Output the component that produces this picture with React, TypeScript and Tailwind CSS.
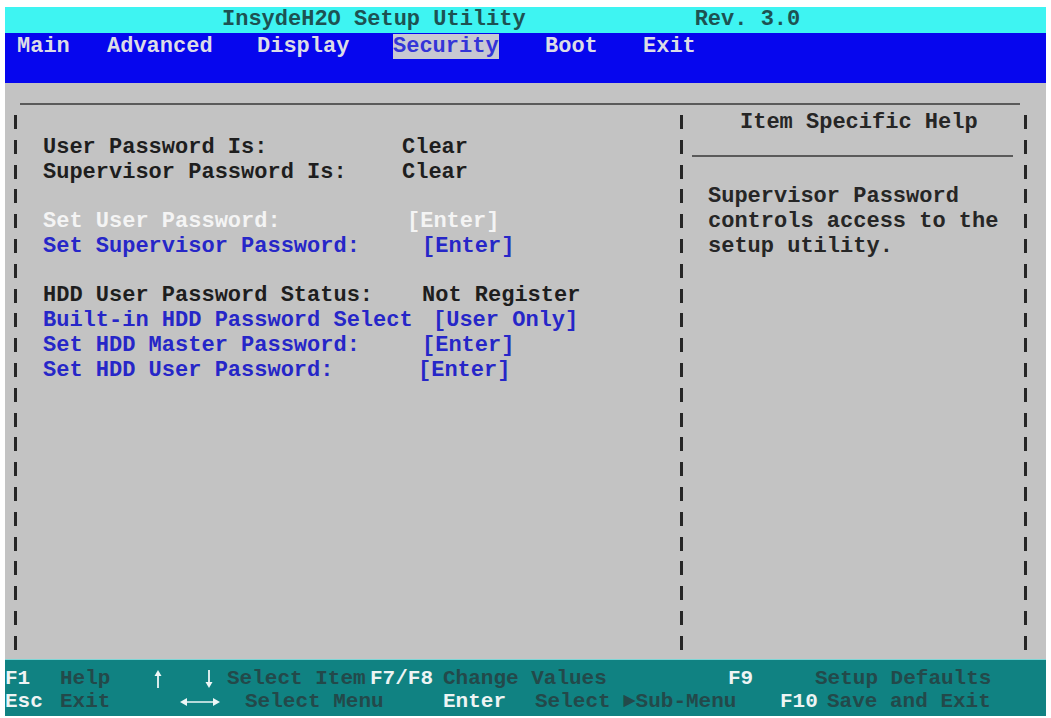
import React from "react"

type Row = { label?: string; value?: string; w?: string; tone?: "dark" | "blue" | "white" }

const tones = {
  dark: "text-[#1e1e1e]",
  blue: "text-[#2626c8]",
  white: "text-[#f4f4f4]",
}

const leftRows: Row[] = [
  {},
  { label: "User Password Is:", value: "Clear", w: "w-[359px]", tone: "dark" },
  { label: "Supervisor Password Is:", value: "Clear", w: "w-[359px]", tone: "dark" },
  {},
  { label: "Set User Password:", value: "[Enter]", w: "w-[364px]", tone: "white" },
  { label: "Set Supervisor Password:", value: "[Enter]", w: "w-[379px]", tone: "blue" },
  {},
  { label: "HDD User Password Status:", value: "Not Register", w: "w-[379px]", tone: "dark" },
  { label: "Built-in HDD Password Select", value: "[User Only]", w: "w-[390px]", tone: "blue" },
  { label: "Set HDD Master Password:", value: "[Enter]", w: "w-[379px]", tone: "blue" },
  { label: "Set HDD User Password:", value: "[Enter]", w: "w-[375px]", tone: "blue" },
]

const ROWS = 22

/** dashed "|" column, one dash per text row */
function Bar() {
  return (
    <div className="h-[545.6px] w-[3px] shrink-0 bg-[repeating-linear-gradient(to_bottom,transparent_0px,transparent_5px,#262626_5px,#262626_19px,transparent_19px,transparent_24.8px)]" />
  )
}

const ink = "#eef6f6"

function LongArrow() {
  return (
    <svg width="40" height="12" viewBox="0 0 40 12" className="inline-block">
      <line x1="3" y1="6" x2="37" y2="6" stroke={ink} strokeWidth="1.6" />
      <path d="M0 6 L7 2 L7 10 Z" fill={ink} />
      <path d="M40 6 L33 2 L33 10 Z" fill={ink} />
    </svg>
  )
}

function VArrow({ down }: { down?: boolean }) {
  return (
    <svg width="10" height="18" viewBox="0 0 10 18" className={down ? "rotate-180" : ""}>
      <line x1="5" y1="4" x2="5" y2="18" stroke={ink} strokeWidth="1.8" />
      <path d="M5 0 L1.5 6 L8.5 6 Z" fill={ink} />
    </svg>
  )
}

export default function App() {
  const key = "text-[#eef4f4]"
  const desc = "text-[#23494a]"

  return (
    <div className="h-[718px] w-[1051px] overflow-hidden bg-white px-[5px] pt-[7px] font-['Liberation_Mono','Courier_New',monospace] text-[22px] font-bold">
      {/* title */}
      <div className="flex h-[26px] items-center whitespace-pre bg-[#3ef4f2] pl-[217px] leading-[26px] text-[#1d5252]">
        <span>InsydeH2O Setup Utility</span>
        <span className="ml-[169px]">Rev. 3.0</span>
      </div>

      {/* menu */}
      <div className="h-[50px] bg-[#0606ee] pl-[12px] pt-[4px]">
        <div className="flex h-[20px] items-center leading-[20px] text-[#dcdce6]">
          <span className="w-[90px]">Main</span>
          <span className="w-[150px]">Advanced</span>
          <span className="w-[136px]">Display</span>
          <span className="w-[152px]">
            <span className="bg-[#c8c8d2] text-[#3434d8]">Security</span>
          </span>
          <span className="w-[98px]">Boot</span>
          <span>Exit</span>
        </div>
      </div>

      {/* body */}
      <div className="h-[576px] bg-[#c3c3c3] pt-[20px]">
        <div className="ml-[15px] h-[2px] w-[1000px] bg-[#5a5a5a]" />
        <div className="mt-[5px] flex pl-[9px]">
          <Bar />
          <div className="w-[663px] shrink-0">
            {Array.from({ length: ROWS }).map((_, i) => {
              const r = leftRows[i] ?? {}
              return (
                <div key={i} className={`flex h-[24.8px] items-center whitespace-pre pl-[26px] ${tones[r.tone ?? "dark"]}`}>
                  {r.label && <span className={`${r.w} shrink-0`}>{r.label}</span>}
                  {r.value && <span>{r.value}</span>}
                </div>
              )
            })}
          </div>
          <Bar />
          <div className="w-[341px] shrink-0 text-[#262626]">
            <div className="flex h-[24.8px] items-center pl-[57px]">Item Specific Help</div>
            <div className="flex h-[24.8px] items-end pb-[3px] pl-[9px]">
              <div className="h-[2px] w-[321px] bg-[#5a5a5a]" />
            </div>
            <div className="h-[24.8px]" />
            <div className="flex h-[24.8px] items-center pl-[25px]">Supervisor Password</div>
            <div className="flex h-[24.8px] items-center pl-[25px]">controls access to the</div>
            <div className="flex h-[24.8px] items-center pl-[25px]">setup utility.</div>
          </div>
          <Bar />
        </div>
      </div>

      {/* key help */}
      <div className="h-[57px] border-t border-[#7fd6d6] bg-[#108282] pt-[7px] text-[21px] leading-[23px]">
        <div className="flex h-[23px] items-center whitespace-pre">
          <span className={`w-[55px] shrink-0 ${key}`}>F1</span>
          <span className={`w-[90px] shrink-0 ${desc}`}>Help</span>
          <span className="flex w-[54px] shrink-0 items-center pl-[3px]">
            <VArrow />
          </span>
          <span className="flex w-[23px] shrink-0 items-center">
            <VArrow down />
          </span>
          <span className={`w-[143px] shrink-0 ${desc}`}>Select Item</span>
          <span className={`w-[73px] shrink-0 ${key}`}>F7/F8</span>
          <span className={`w-[285px] shrink-0 ${desc}`}>Change Values</span>
          <span className={`w-[87px] shrink-0 ${key}`}>F9</span>
          <span className={desc}>Setup Defaults</span>
        </div>
        <div className="flex h-[23px] items-center whitespace-pre">
          <span className={`w-[55px] shrink-0 ${key}`}>Esc</span>
          <span className={`w-[120px] shrink-0 ${desc}`}>Exit</span>
          <span className="flex w-[65px] shrink-0 items-center">
            <LongArrow />
          </span>
          <span className={`w-[198px] shrink-0 ${desc}`}>Select Menu</span>
          <span className={`w-[92px] shrink-0 ${key}`}>Enter</span>
          <span className={`w-[88px] shrink-0 ${desc}`}>Select</span>
          <span className={`w-[157px] shrink-0 ${desc}`}>►Sub-Menu</span>
          <span className={`w-[47px] shrink-0 ${key}`}>F10</span>
          <span className={desc}>Save and Exit</span>
        </div>
      </div>
    </div>
  )
}
